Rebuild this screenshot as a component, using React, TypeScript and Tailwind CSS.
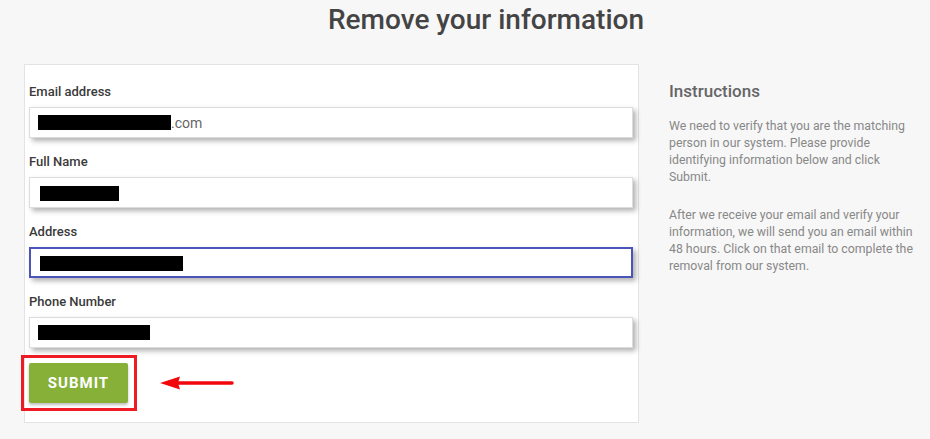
import React from "react";

const font = { fontFamily: "Roboto, 'Noto Sans', sans-serif" };

function Redacted({ w }: { w: number }) {
  return <span className="inline-block h-[15px] bg-black align-middle" style={{ width: w }} />;
}

function Field({
  label,
  focused,
  children,
}: {
  label: string;
  focused?: boolean;
  children: React.ReactNode;
}) {
  return (
    <div className="flex flex-col">
      <label className="h-[16px] text-[13px] leading-[16px] font-medium text-[#3a3a3a]">{label}</label>
      <div
        className={
          "mt-[7px] flex h-[31px] items-center bg-white pl-[8px] text-[14px] text-[#666] shadow-[3px_3px_5px_rgba(0,0,0,0.3)] " +
          (focused ? "border-2 border-[#4b55b9]" : "border border-[#dcdcdc]")
        }
      >
        {children}
      </div>
    </div>
  );
}

export default function App() {
  return (
    <div className="min-h-[439px] w-full bg-[#f7f7f7]" style={font}>
      <div className="flex justify-center pl-[42px] pt-[3px]">
        <h1 className="h-[34px] text-[28px] leading-[34px] font-medium text-[#444]">Remove your information</h1>
      </div>

      <div className="mt-[27px] flex gap-[30px] pl-[24px]">
        <div className="w-[615px] border border-[#e3e3e3] bg-white pl-[4px] pr-[5px] pt-[19px] pb-[11px]">
          <div className="flex flex-col gap-[16px]">
            <Field label="Email address">
              <Redacted w={133} />
              <span className="leading-none">.com</span>
            </Field>
            <Field label="Full Name">
              <span className="pl-[2px]">
                <Redacted w={79} />
              </span>
            </Field>
            <Field label="Address" focused>
              <span className="pl-[1px]">
                <Redacted w={143} />
              </span>
            </Field>
            <Field label="Phone Number">
              <Redacted w={112} />
            </Field>
          </div>

          <div className="mt-[7px] flex items-center">
            <div className="-ml-[8px] border-[3px] border-[#ee1b24] pl-[5px] pr-[6px] py-[5px]">
              <button className="h-[40px] w-[99px] rounded-[2px] bg-[#86b038] text-[15px] font-bold tracking-[1px] text-white shadow-[0_2px_3px_rgba(0,0,0,0.25)]">
                SUBMIT
              </button>
            </div>
            <svg className="ml-[22px]" width="76" height="16" viewBox="0 0 76 16">
              <path d="M18 8 H73" stroke="#f2070d" strokeWidth="3.5" strokeLinecap="round" />
              <path d="M1 8 L21 1.5 L19 8 L21 14.5 Z" fill="#f2070d" />
            </svg>
          </div>
        </div>

        <div className="w-[250px] pt-[17px]">
          <h2 className="h-[20px] text-[17px] leading-[20px] font-medium text-[#666]">Instructions</h2>
          <p className="mt-[17px] text-[12.3px] leading-[17px] text-[#888]">
            We need to verify that you are the matching person in our system. Please provide identifying information
            below and click Submit.
          </p>
          <p className="mt-[21px] text-[12.3px] leading-[17px] text-[#888]">
            After we receive your email and verify your information, we will send you an email within 48 hours. Click on
            that email to complete the removal from our system.
          </p>
        </div>
      </div>
    </div>
  );
}
